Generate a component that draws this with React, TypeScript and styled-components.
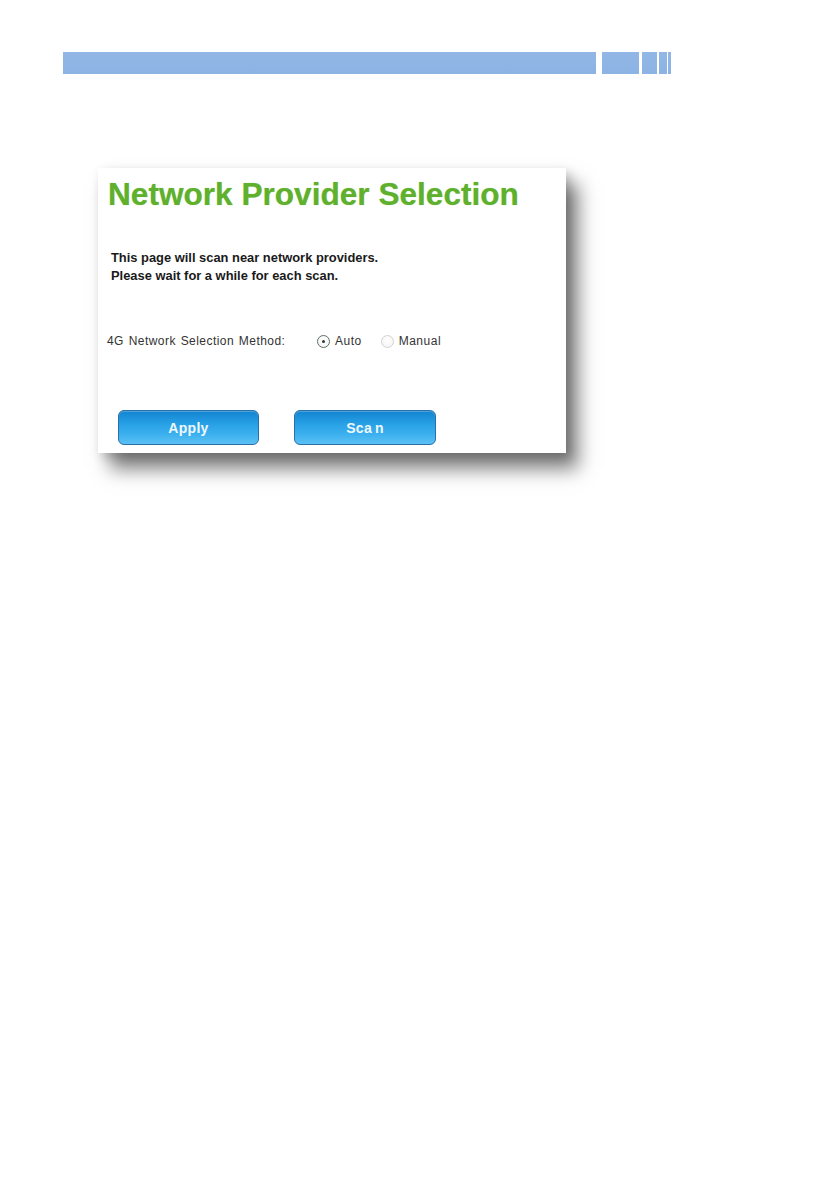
import React from 'react';
import styled, { createGlobalStyle } from 'styled-components';

const GlobalStyle = createGlobalStyle`
  html, body {
    margin: 0;
    padding: 0;
    background: #ffffff;
    font-family: 'Liberation Sans', Arial, sans-serif;
  }
`;

const Page = styled.div`
  width: 839px;
  min-height: 1191px;
  padding-top: 52px;
  box-sizing: border-box;
`;

const HeaderStrip = styled.div`
  display: flex;
  height: 22px;
  margin-left: 63px;
`;

const StripBlock = styled.div<{ $w: number; $gap: number }>`
  width: ${p => p.$w}px;
  margin-right: ${p => p.$gap}px;
  height: 100%;
  background: linear-gradient(180deg, #92b7e6 0%, #8bb3e3 100%);
`;

const Shot = styled.div`
  margin: 94px 0 0 98px;
  width: 468px;
  height: 285px;
  box-sizing: border-box;
  padding: 8px 0 0 10px;
  background: #ffffff;
  box-shadow: 12px 16px 18px rgba(0, 0, 0, 0.5), 4px 4px 10px rgba(0, 0, 0, 0.18);
  display: flex;
  flex-direction: column;
`;

const Title = styled.h1`
  margin: 0;
  font-size: 31.6px;
  line-height: 36px;
  font-weight: bold;
  color: #5fb02c;
  text-shadow: 0 0 1px rgba(95, 176, 44, 0.5);
  white-space: nowrap;
`;

const Intro = styled.p`
  margin: 37px 0 0 3px;
  font-size: 12.9px;
  line-height: 18px;
  font-weight: bold;
  color: #1a1a1a;
`;

const MethodRow = styled.div`
  display: flex;
  align-items: center;
  height: 20px;
  margin: 46px 0 0 -1px;
  font-size: 12px;
  color: #333333;
`;

const MethodLabel = styled.span`
  width: 210px;
  letter-spacing: 0.45px;
  word-spacing: 1px;
`;

const Option = styled.label`
  display: flex;
  align-items: center;
  gap: 5px;
  margin-right: 19px;
  font-size: 12px;
  letter-spacing: 0.5px;
  color: #333333;
`;

const RadioDot = styled.span<{ $on?: boolean }>`
  width: 13px;
  height: 13px;
  box-sizing: border-box;
  border-radius: 50%;
  border: 1px solid ${p => (p.$on ? '#5f6f62' : '#d2d2d2')};
  background: radial-gradient(circle at 50% 40%, #ffffff 0%, #f2f2f2 100%);
  display: flex;
  align-items: center;
  justify-content: center;

  &::after {
    content: '';
    width: 3px;
    height: 3px;
    border-radius: 50%;
    background: ${p => (p.$on ? '#2d3a2f' : 'transparent')};
  }
`;

const Buttons = styled.div`
  display: flex;
  gap: 35px;
  margin: 59px 0 0 10px;
`;

const BlueButton = styled.button<{ $w: number }>`
  width: ${p => p.$w}px;
  height: 35px;
  border: 1px solid #2a6fa6;
  border-radius: 6px;
  background: linear-gradient(180deg, #1283d0 0%, #259ee4 35%, #3bb0ee 70%, #5cc0f4 100%);
  box-shadow: inset 0 1px 0 rgba(255, 255, 255, 0.25);
  color: #eef8ff;
  font-family: 'Liberation Sans', Arial, sans-serif;
  font-size: 14px;
  font-weight: bold;
  letter-spacing: 0.3px;
  padding: 0;
  cursor: pointer;
`;

const Gap = styled.span`
  display: inline-block;
  width: 3px;
`;

export default function App() {
  return (
    <Page>
      <GlobalStyle />
      <HeaderStrip>
        <StripBlock $w={533} $gap={6} />
        <StripBlock $w={37} $gap={3} />
        <StripBlock $w={15} $gap={2} />
        <StripBlock $w={8} $gap={1} />
        <StripBlock $w={3} $gap={0} />
      </HeaderStrip>

      <Shot>
        <Title>Network Provider Selection</Title>
        <Intro>
          This page will scan near network providers.
          <br />
          Please wait for a while for each scan.
        </Intro>
        <MethodRow>
          <MethodLabel>4G Network Selection Method:</MethodLabel>
          <Option>
            <RadioDot $on />
            Auto
          </Option>
          <Option>
            <RadioDot />
            Manual
          </Option>
        </MethodRow>
        <Buttons>
          <BlueButton $w={141}>Apply</BlueButton>
          <BlueButton $w={142}>
            Sca<Gap />n
          </BlueButton>
        </Buttons>
      </Shot>
    </Page>
  );
}
